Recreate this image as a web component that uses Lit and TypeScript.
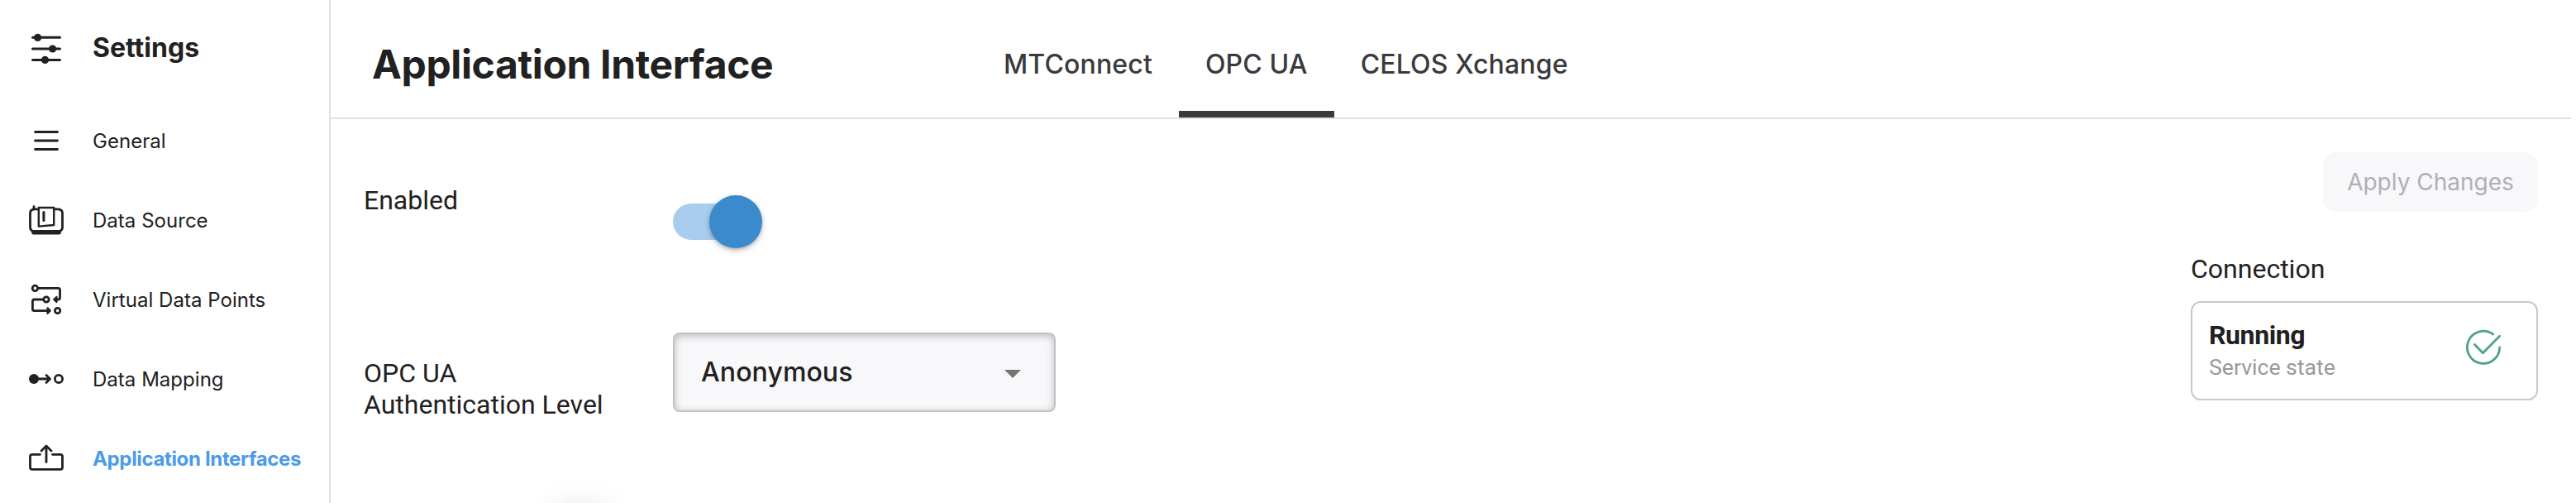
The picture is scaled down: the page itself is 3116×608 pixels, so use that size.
import { LitElement, html, css, svg } from "lit";
import { customElement } from "lit/decorators.js";
import { classMap } from "lit/directives/class-map.js";

const ICONS = {
  settings: svg`
    <g stroke-width="3"><path d="M9.5 13.3H42.5M9.5 27H42.5M9.5 40.4H42.5"/></g>
    <g fill="#212121" stroke="none"><circle cx="15.6" cy="13.4" r="4.6"/><circle cx="33.6" cy="27" r="4.6"/><circle cx="24.5" cy="40.4" r="4.6"/></g>`,
  general: svg`<path stroke-width="2.8" d="M12.5 15.5H39.5M12.5 26H39.5M12.5 36.5H39.5"/>`,
  source: svg`
    <path d="M16 12.9H12Q6.5 12.9 6.5 18V34.5Q6.5 38.5 10 39.5H42Q45.5 38.5 45.5 34.5V18Q45.5 12.9 40 12.9H36"/>
    <path stroke-width="4.6" d="M10.5 41.3H41.5"/><path d="M11 9.7V12"/>
    <path stroke-width="2.4" d="M16.8 11H35.2V32L16.8 33.6Z"/><path stroke-width="3" d="M22.9 16.5V26.5"/>`,
  virtual: svg`
    <circle cx="12.4" cy="12.4" r="3.2"/><circle cx="26" cy="26" r="3.2"/><circle cx="39.6" cy="39.6" r="3.2"/>
    <path d="M16 12.4H40.5Q42.5 12.4 42.5 14.5V24Q42.5 26 40.5 26H36M22.5 26H11.5Q9.4 26 9.4 28V37.5Q9.4 39.6 11.5 39.6H30"/>
    <path fill="#212121" d="M38.4 23L35.4 26L38.4 29ZM27.6 36.4L30.6 39.6L27.6 42.8Z" stroke-width="2.4"/>`,
  mapping: svg`
    <circle cx="11" cy="26" r="6" fill="#212121" stroke="none"/><circle cx="41" cy="26" r="4.6"/>
    <path d="M15 26H30M26 21.5L30.5 26L26 30.5"/>`,
  interfaces: svg`
    <path d="M18.5 21.3H9Q6.5 21.3 6.5 23.8V37Q6.5 39.4 9 39.4H43Q45.5 39.4 45.5 37V23.8Q45.5 21.3 43 21.3H33.5"/>
    <path d="M26 30.5V11.5M20 17L26 11L32 17"/>`,
};

const icon = (name: keyof typeof ICONS) =>
  html`<svg class="icon" viewBox="0 0 52 52" fill="none" stroke="#212121" stroke-width="2.8" stroke-linecap="round" stroke-linejoin="round">${ICONS[name]}</svg>`;

const NAV: { icon: keyof typeof ICONS; label: string; active?: boolean }[] = [
  { icon: "general", label: "General" },
  { icon: "source", label: "Data Source" },
  { icon: "virtual", label: "Virtual Data Points" },
  { icon: "mapping", label: "Data Mapping" },
  { icon: "interfaces", label: "Application Interfaces", active: true },
];

@customElement("settings-nav")
class SettingsNav extends LitElement {
  static styles = css`
    :host { display: block; box-sizing: border-box; width: 400px; flex: none; border-right: 2px solid #e0e0e0; font-family: Inter, sans-serif; color: #212121; }
    .title, .item { display: flex; align-items: center; gap: 30px; padding-left: 30px; white-space: nowrap; }
    .title { height: 116px; font-size: 32px; font-weight: 650; margin-bottom: 6px; }
    .item { height: 96px; font-size: 24px; letter-spacing: 0.03px; }
    .item span { padding-top: 2px; }
    .active { color: #4a9be8; font-weight: 700; letter-spacing: -0.35px; }
    .icon { width: 52px; height: 52px; flex: none; overflow: visible; }
  `;
  render() {
    return html`
      <div class="title">${icon("settings")}<span>Settings</span></div>
      ${NAV.map((n) => html`<div class=${classMap({ item: true, active: !!n.active })}>${icon(n.icon)}<span>${n.label}</span></div>`)}
    `;
  }
}

@customElement("service-card")
class ServiceCard extends LitElement {
  static styles = css`
    :host { box-sizing: border-box; display: flex; justify-content: space-between; align-items: center; height: 120px; padding: 0 43px 4px 20px; border: 2px solid #c8c8c8; border-radius: 12px; font-family: Roboto, sans-serif; }
    .state { padding-top: 4px; font-size: 32px; line-height: 40px; font-weight: 700; letter-spacing: -0.4px; color: #212121; }
    .caption { font-size: 26.6px; line-height: 38px; color: #999; }
    .check { width: 42px; height: 42px; margin-bottom: 4px; overflow: visible; }
  `;
  render() {
    return html`
      <div>
        <div class="state">Running</div>
        <div class="caption">Service state</div>
      </div>
      <svg class="check" viewBox="0 0 42 42" fill="none" stroke="#4fa384" stroke-width="2.8" stroke-linecap="round" stroke-linejoin="round">
        <path d="M32.6 5A19.6 19.6 0 1 0 40.6 21"/><path d="M10.5 17.5L20.3 27.8L40.6 7.2"/>
      </svg>
    `;
  }
}

@customElement("app-root")
class AppRoot extends LitElement {
  static styles = css`
    :host { display: flex; height: 608px; overflow: hidden; background: #fff; color: #212121; font-family: Roboto, sans-serif; font-size: 32px; line-height: 38px; }
    .main { flex: 1; min-width: 0; display: flex; flex-direction: column; }
    .header { display: flex; box-sizing: border-box; height: 144px; margin-right: 6px; border-bottom: 2px solid #e0e0e0; font-family: Inter, sans-serif; }
    .heading { box-sizing: border-box; margin: 0; width: 782px; padding: 48px 0 0 50px; font-size: 48px; line-height: 60px; font-weight: 650; letter-spacing: -0.35px; white-space: nowrap; }
    .tab { box-sizing: border-box; padding: 58px 32px 0; height: 142px; font-weight: 500; line-height: 40px; letter-spacing: 0.15px; color: #393a3e; white-space: nowrap; }
    .selected { border-bottom: 8px solid #393a3e; }
    .body { flex: 1; display: flex; justify-content: space-between; padding: 0 46px 0 40px; }
    .form { display: grid; grid-template-columns: 374px 463px; grid-template-rows: 258px auto 1fr; }
    .label-enabled { padding-top: 79px; }
    .label-auth { padding-top: 30px; }
    .toggle { display: flex; align-items: center; width: 108px; height: 64px; margin-top: 92px; }
    .track { width: 102px; height: 44px; border-radius: 22px; background: #a9cdee; }
    .thumb { flex: none; width: 64px; height: 64px; margin-left: -58px; border-radius: 50%; background: #3b8acb; box-shadow: 0 2px 3px rgba(0,0,0,.1), 0 2px 6px rgba(0,0,0,.18), 0 4px 8px rgba(0,0,0,.08); }
    .select { box-sizing: border-box; display: flex; justify-content: space-between; align-items: center; height: 96px; padding: 0 40px 0 32px; border: 2px solid #c3c3c6; border-radius: 8px; background: #f8f8fa; box-shadow: inset 0 2px 10px rgba(0,0,0,.25); font-family: Inter, sans-serif; font-weight: 500; letter-spacing: 0.1px; }
    .arrow { border: 10px solid transparent; border-bottom: 0; border-top-color: #757575; margin-top: 4px; }
    .glow { grid-column: 1; align-self: end; justify-self: start; width: 54px; height: 50px; margin: 0 0 -64px 236px; border-radius: 50%; box-shadow: 0 0 40px 6px rgba(0,0,0,.17); }
    .side { width: 420px; display: flex; flex-direction: column; padding-top: 40px; }
    .apply { box-sizing: border-box; align-self: flex-end; width: 260px; height: 72px; border: 0; border-radius: 16px; background: #f8f8fa; color: #afb0b5; font: 400 28px/72px Inter, sans-serif; padding: 0; text-align: center; white-space: nowrap; }
    .section { margin: 50px 0 20px; }
  `;
  render() {
    return html`
      <settings-nav></settings-nav>
      <div class="main">
        <div class="header">
          <h1 class="heading">Application Interface</h1>
          <div class="tab">MTConnect</div>
          <div class="tab selected">OPC UA</div>
          <div class="tab">CELOS Xchange</div>
        </div>
        <div class="body">
          <div class="form">
            <div class="label-enabled">Enabled</div>
            <div class="toggle"><div class="track"></div><div class="thumb"></div></div>
            <div class="label-auth">OPC UA<br />Authentication Level</div>
            <div class="select"><span>Anonymous</span><span class="arrow"></span></div>
            <div class="glow"></div>
          </div>
          <div class="side">
            <button class="apply" disabled>Apply Changes</button>
            <div class="section">Connection</div>
            <service-card></service-card>
          </div>
        </div>
      </div>
    `;
  }
}
